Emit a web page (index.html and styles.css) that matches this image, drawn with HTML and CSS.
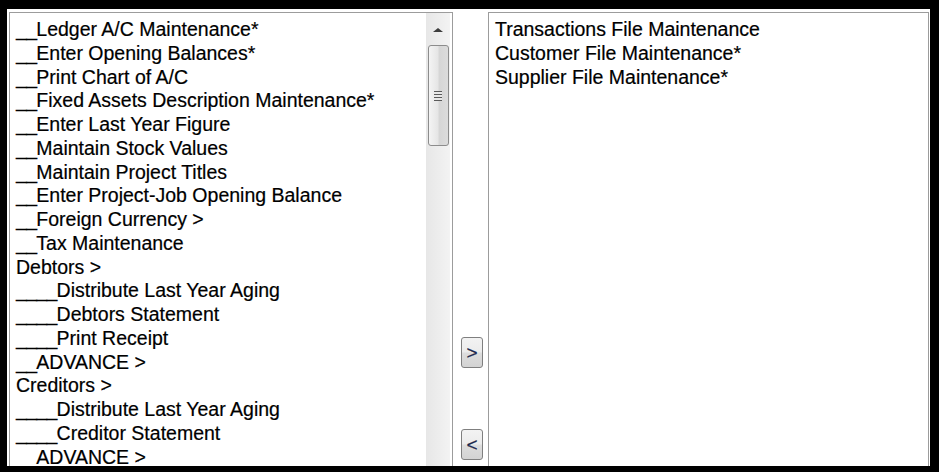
FILE: index.html
```html
<!DOCTYPE html>
<html>
<head>
<meta charset="utf-8">
<link rel="stylesheet" href="styles.css">
</head>
<body>
<div class="frame">
  <div class="listbox left">
    <div class="items">
      <div class="item"><span class="ind">__</span>Ledger A/C Maintenance*</div>
      <div class="item"><span class="ind">__</span>Enter Opening Balances*</div>
      <div class="item"><span class="ind">__</span>Print Chart of A/C</div>
      <div class="item"><span class="ind">__</span>Fixed Assets Description Maintenance*</div>
      <div class="item"><span class="ind">__</span>Enter Last Year Figure</div>
      <div class="item"><span class="ind">__</span>Maintain Stock Values</div>
      <div class="item"><span class="ind">__</span>Maintain Project Titles</div>
      <div class="item"><span class="ind">__</span>Enter Project-Job Opening Balance</div>
      <div class="item"><span class="ind">__</span>Foreign Currency &gt;</div>
      <div class="item"><span class="ind">__</span>Tax Maintenance</div>
      <div class="item">Debtors &gt;</div>
      <div class="item"><span class="ind">____</span>Distribute Last Year Aging</div>
      <div class="item"><span class="ind">____</span>Debtors Statement</div>
      <div class="item"><span class="ind">____</span>Print Receipt</div>
      <div class="item"><span class="ind">__</span>ADVANCE &gt;</div>
      <div class="item">Creditors &gt;</div>
      <div class="item"><span class="ind">____</span>Distribute Last Year Aging</div>
      <div class="item"><span class="ind">____</span>Creditor Statement</div>
      <div class="item"><span class="ind">__</span>ADVANCE &gt;</div>
    </div>
    <div class="scrollbar">
      <div class="arrow-up"><span class="tri"></span></div>
      <div class="thumb"><span class="grip"></span></div>
    </div>
  </div>
  <div class="middle">
    <button class="btn btn-add">&gt;</button>
    <button class="btn btn-remove">&lt;</button>
  </div>
  <div class="listbox right">
    <div class="items">
      <div class="item">Transactions File Maintenance</div>
      <div class="item">Customer File Maintenance*</div>
      <div class="item">Supplier File Maintenance*</div>
    </div>
  </div>
</div>
</body>
</html>
```
FILE: styles.css
```css
html, body {
  margin: 0;
  padding: 0;
  background: #fff;
}

.frame {
  box-sizing: border-box;
  width: 939px;
  height: 472px;
  border-style: solid;
  border-color: #000;
  border-width: 9px 9px 6px 7px;
  padding: 3px 1px 0 2px;
  overflow: hidden;
  display: flex;
  align-items: flex-start;
  background: #fff;
  font-family: "Liberation Sans", Arial, sans-serif;
  font-size: 19.5px;
  color: #000;
  -webkit-text-stroke: 0.2px #000;
}

.listbox {
  box-sizing: border-box;
  height: 470px;
  border: 1px solid #9c9c9c;
  background: #fff;
  display: flex;
}

.listbox.left {
  width: 444px;
}

.listbox.right {
  width: 441px;
}

.items {
  flex: 1;
  padding: 5px 0 0 6px;
  min-width: 0;
}

.item {
  line-height: 23.78px;
  height: 23.78px;
  white-space: pre;
}

.ind {
  letter-spacing: -0.7px;
}

.scrollbar {
  width: 24px;
  margin-right: 2px;
  background: linear-gradient(to right, #e7e7e7, #eeeeee 60%, #f3f3f3);
  display: flex;
  flex-direction: column;
  align-items: center;
}

.arrow-up {
  height: 32px;
  width: 100%;
  display: flex;
  justify-content: center;
  align-items: flex-start;
  padding-top: 15px;
  box-sizing: border-box;
}

.tri {
  width: 0;
  height: 0;
  border-left: 5px solid transparent;
  border-right: 5px solid transparent;
  border-bottom: 4px solid #3c3c3c;
}

.thumb {
  box-sizing: border-box;
  width: 21px;
  height: 101px;
  border: 1px solid #8c8c8c;
  border-radius: 3px;
  background: linear-gradient(to right, #f4f4f4, #e6e6e6 45%, #d6d6d6 55%, #dcdcdc);
  display: flex;
  justify-content: center;
  align-items: center;
}

.grip {
  width: 8px;
  height: 10px;
  background: repeating-linear-gradient(to bottom, #5a5a5a 0, #5a5a5a 1px, #e8e8e8 1px, #e8e8e8 3px);
}

.middle {
  width: 35px;
  display: flex;
  flex-direction: column;
  align-items: flex-start;
  padding-top: 325px;
  padding-left: 8px;
  box-sizing: border-box;
}

.btn {
  box-sizing: border-box;
  width: 22px;
  height: 31px;
  padding: 0;
  margin: 0;
  border: 1px solid #7f7f7f;
  border-radius: 3px;
  background: linear-gradient(to bottom, #f3f3f3, #ececec 48%, #dddddd 52%, #d3d3d3);
  font-family: "Liberation Sans", Arial, sans-serif;
  font-size: 19px;
  color: #1d2b5c;
  line-height: 27px;
  text-align: center;
}

.btn-remove {
  margin-top: 61px;
}

.listbox.right .items {
  padding-left: 6px;
}
```
